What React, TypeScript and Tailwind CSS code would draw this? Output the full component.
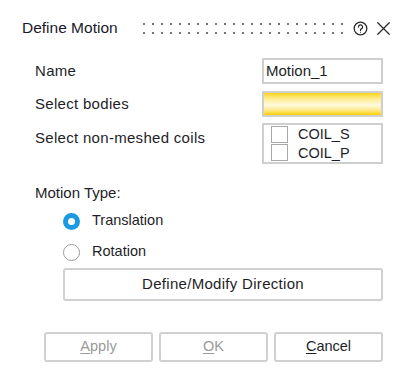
import { X } from "lucide-react";

const font = { fontFamily: '"Liberation Sans", Arial, sans-serif' };

function Grip() {
  const cols = Array.from({ length: 23 });
  return (
    <div className="flex shrink-0 flex-col gap-[7px]">
      {[0, 1].map((r) => (
        <div key={r} className="flex gap-[7px]">
          {cols.map((_, i) => (
            <span key={i} className="block h-[2px] w-[2px] bg-[#767676]" />
          ))}
        </div>
      ))}
    </div>
  );
}

function HelpIcon() {
  return (
    <svg width="15" height="15" viewBox="0 0 14 14" fill="none" stroke="#2a2a2a" strokeWidth="1.2">
      <circle cx="7" cy="7" r="5.9" />
      <path d="M5.1 5.6a1.9 1.9 0 1 1 2.7 1.7c-.6.3-.8.6-.8 1.2v.4" strokeLinecap="round" />
      <circle cx="7" cy="10.5" r="0.55" fill="#2a2a2a" stroke="none" />
    </svg>
  );
}

function Radio({ checked, label }: { checked?: boolean; label: string }) {
  return (
    <div className="flex h-[31px] items-center">
      {checked ? (
        <span className="flex h-[17px] w-[17px] items-center justify-center rounded-full bg-[#1a9ae0]">
          <span className="h-[7px] w-[7px] rounded-full bg-white" />
        </span>
      ) : (
        <span className="h-[17px] w-[17px] rounded-full border border-[#9a9a9a] bg-white" />
      )}
      <span className="ml-[12px] text-[14.5px] text-[#1e1e28]">{label}</span>
    </div>
  );
}

function CoilRow({ label }: { label: string }) {
  return (
    <div className="flex h-[19px] items-center">
      <span className="ml-[7px] h-[17px] w-[17px] border border-[#a8a8a8] bg-white" />
      <span className="ml-[10px] text-[14.5px] leading-none text-[#1e1e28]">{label}</span>
    </div>
  );
}

export default function App() {
  return (
    <div style={font} className="h-[392px] w-[417px] bg-white text-[14.5px] text-[#1e1e28]">
      <div className="flex h-[54px] items-center pl-[22px] pt-[2px]">
        <span className="w-[96px] shrink-0 whitespace-nowrap text-[15.5px] text-[#1a1a2a]">Define Motion</span>
        <div className="ml-[25px]">
          <Grip />
        </div>
        <div className="ml-[10px] flex shrink-0 items-center gap-[4px]">
          <HelpIcon />
          <X size={23} strokeWidth={1.3} color="#2a2a2a" />
        </div>
      </div>

      <div className="pl-[35px] pr-[34px]">
        <div className="mt-[4px] flex h-[26px] items-center justify-between">
          <span className="text-[15px] tracking-[0.3px]">Name</span>
          <div className="flex h-[26px] w-[121px] items-center border-2 border-[#cfcfcf] px-[2px] text-[15px]">
            Motion_1
          </div>
        </div>

        <div className="mt-[7px] flex h-[26px] items-center justify-between">
          <span className="text-[15px] tracking-[0.3px]">Select bodies</span>
          <div className="h-[26px] w-[121px] border-2 border-[#cfcfcf] bg-[linear-gradient(to_bottom,#ffd31a_0%,#ffeb8a_25%,#fffbe0_55%,#ffe680_80%,#ffd000_100%)]" />
        </div>

        <div className="mt-[6px] flex justify-between">
          <span className="mt-[4px] text-[15px] tracking-[0.3px]">Select non-meshed coils</span>
          <div className="flex h-[41px] w-[121px] flex-col border-2 border-[#cfcfcf]">
            <CoilRow label="COIL_S" />
            <CoilRow label="COIL_P" />
          </div>
        </div>

        <div className="mt-[18px] text-[15px]">Motion Type:</div>

        <div className="mt-[1px] pl-[28px]">
          <Radio checked label="Translation" />
          <Radio label="Rotation" />
          <button className="flex h-[33px] w-full items-center justify-center rounded-[3px] border-2 border-[#d0d0d0] bg-white text-[15px] tracking-[0.3px] text-[#1e1e28]">
            Define/Modify Direction
          </button>
        </div>
      </div>

      <div className="mt-[31px] flex justify-end gap-[6px] pr-[34px]">
        <button disabled className="h-[30px] w-[109px] rounded-[3px] border-2 border-[#d0d0d0] bg-white text-[14.5px] text-[#9a9a9a]">
          <span className="underline underline-offset-2">A</span>pply
        </button>
        <button disabled className="h-[30px] w-[109px] rounded-[3px] border-2 border-[#d0d0d0] bg-white text-[14.5px] text-[#9a9a9a]">
          <span className="underline underline-offset-2">O</span>K
        </button>
        <button className="h-[30px] w-[109px] rounded-[3px] border-2 border-[#d0d0d0] bg-white text-[14.5px] text-[#1e1e28]">
          <span className="underline underline-offset-2">C</span>ancel
        </button>
      </div>
    </div>
  );
}
